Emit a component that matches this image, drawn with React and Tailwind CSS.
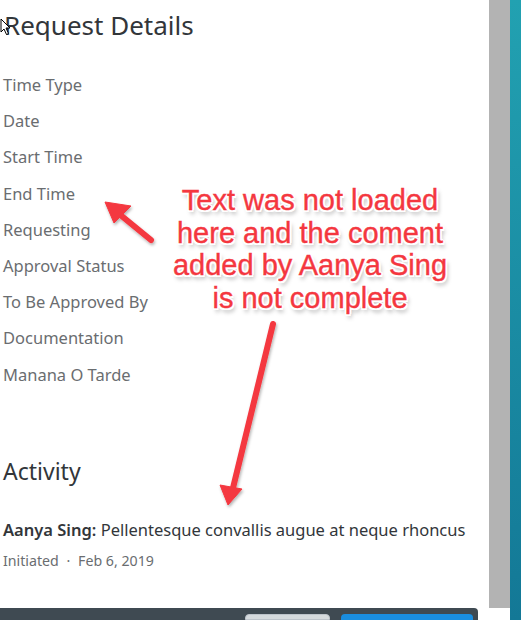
export default function App() {
  const labels = [
    'Time Type',
    'Date',
    'Start Time',
    'End Time',
    'Requesting',
    'Approval Status',
    'To Be Approved By',
    'Documentation',
    'Manana O Tarde',
  ];

  return (
    <div className="relative flex h-[620px] w-[521px] overflow-hidden bg-white" style={{ fontFamily: '"Noto Sans", Arial, sans-serif' }}>
      <div className="flex w-[489px] flex-col">
        <div className="flex flex-1 flex-col pl-[3px]">
          <h1 className="mt-[9px] pl-[1px] text-[26px] leading-[32px] text-[#32363a]">Request Details</h1>
          <div className="mt-[26px] flex flex-col">
            {labels.map(l => (
              <div key={l} className="h-[36.2px] text-[16.5px] leading-[36px] text-[#6a6d70]">{l}</div>
            ))}
          </div>
          <h2 className="mt-[63px] text-[23px] leading-[30px] text-[#32363a]">Activity</h2>
          <div className="mt-[33px] whitespace-nowrap text-[16.5px] leading-[22px] text-[#32363a]">
            <span className="font-semibold">Aanya Sing:</span> Pellentesque convallis augue at neque rhoncus
          </div>
          <div className="mt-[10px] text-[14.2px] leading-[20px] text-[#6a6d70]">
            Initiated <span className="mx-[4px]">·</span> Feb 6, 2019
          </div>
        </div>
        <div className="flex h-[12px] w-[478px] items-end justify-end gap-[11px] rounded-tr-[4px] bg-[#3f4a52] pr-[5px]">
          <div className="h-[6px] w-[85px] rounded-t-[4px] border border-[#bcc3ca] bg-[#d5dadd]" />
          <div className="h-[6px] w-[132px] rounded-t-[4px] bg-[#1a8ee0]" />
        </div>
      </div>
      <div className="flex w-[21px] flex-col">
        <div className="flex-1 bg-[#b3b3b3]" />
        <div className="h-[12px] bg-white" />
      </div>
      <div className="w-[11px] bg-gradient-to-b from-[#22a1b1] to-[#137896]" />

      <svg className="absolute left-0 top-[18px]" width="12" height="18" viewBox="0 0 12 18">
        <path d="M1 1 L1 14 L4 11 L6.5 16.5 L8.5 15.5 L6 10 L10 10 Z" fill="white" stroke="black" strokeWidth="1" />
      </svg>

      <svg className="absolute left-0 top-0" width="489" height="620" viewBox="0 0 489 620">
        <defs>
          <filter id="sh" x="-20%" y="-20%" width="140%" height="140%">
            <feDropShadow dx="1" dy="2" stdDeviation="1.5" floodColor="#000" floodOpacity="0.3" />
          </filter>
        </defs>
        <g filter="url(#sh)" fill="#f4373f" stroke="#f4373f">
          <line x1="151" y1="240" x2="118" y2="213" strokeWidth="6" strokeLinecap="round" />
          <polygon points="105,202 131,206 114,223" strokeWidth="1" strokeLinejoin="round" />
          <line x1="273" y1="324" x2="233" y2="488" strokeWidth="6" strokeLinecap="round" />
          <polygon points="228,505 220,485 242,489" strokeWidth="1" strokeLinejoin="round" />
        </g>
      </svg>

      <div
        className="absolute left-[160px] top-[184px] w-[300px] text-center text-[29px] leading-[32.5px] text-[#f4373f]"
        style={{
          fontFamily: '"Liberation Sans", Arial, sans-serif',
          WebkitTextStroke: '0.4px #f4373f',
          textShadow:
            '2px 0 0 #fff, -2px 0 0 #fff, 0 2px 0 #fff, 0 -2px 0 #fff, 1.5px 1.5px 0 #fff, -1.5px -1.5px 0 #fff, 1.5px -1.5px 0 #fff, -1.5px 1.5px 0 #fff, 2px 4px 4px rgba(0,0,0,0.35)',
        }}
      >
        Text was not loaded
        <br />
        here and the coment
        <br />
        added by Aanya Sing
        <br />
        is not complete
      </div>
    </div>
  );
}
